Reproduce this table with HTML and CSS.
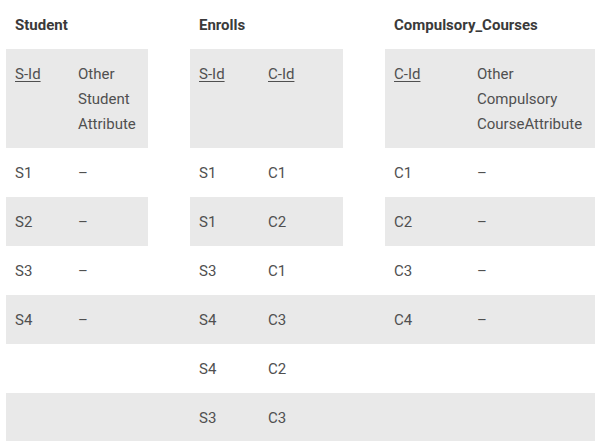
FILE: index.html
```html
<!DOCTYPE html>
<html>
<head>
<meta charset="utf-8">
<link rel="stylesheet" href="styles.css">
</head>
<body>
<table class="schema">
  <colgroup>
    <col class="c1"><col class="c2"><col class="gap">
    <col class="c3"><col class="c4"><col class="gap">
    <col class="c5"><col class="c6">
  </colgroup>
  <tr class="titles">
    <th colspan="2">Student</th><td></td>
    <th colspan="2">Enrolls</th><td></td>
    <th colspan="2">Compulsory_Courses</th>
  </tr>
  <tr class="head seg">
    <td class="k"><u>S-Id</u></td><td>Other<br>Student<br>Attribute</td><td class="g"></td>
    <td class="k"><u>S-Id</u></td><td><u>C-Id</u></td><td class="g"></td>
    <td class="k"><u>C-Id</u></td><td>Other<br>Compulsory<br>CourseAttribute</td>
  </tr>
  <tr>
    <td>S1</td><td>–</td><td></td>
    <td>S1</td><td>C1</td><td></td>
    <td>C1</td><td>–</td>
  </tr>
  <tr class="seg">
    <td>S2</td><td>–</td><td class="g"></td>
    <td>S1</td><td>C2</td><td class="g"></td>
    <td>C2</td><td>–</td>
  </tr>
  <tr>
    <td>S3</td><td>–</td><td></td>
    <td>S3</td><td>C1</td><td></td>
    <td>C3</td><td>–</td>
  </tr>
  <tr class="full">
    <td>S4</td><td>–</td><td></td>
    <td>S4</td><td>C3</td><td></td>
    <td>C4</td><td>–</td>
  </tr>
  <tr>
    <td></td><td></td><td></td>
    <td>S4</td><td>C2</td><td></td>
    <td></td><td></td>
  </tr>
  <tr class="full">
    <td></td><td></td><td></td>
    <td>S3</td><td>C3</td><td></td>
    <td></td><td></td>
  </tr>
</table>
</body>
</html>
```

FILE: styles.css
```css
html, body {
  margin: 0;
  padding: 0;
  background: #ffffff;
}

body {
  padding-left: 6px;
  font-family: Roboto, "Liberation Sans", sans-serif;
  font-size: 15px;
  color: #505050;
}

.schema {
  border-collapse: collapse;
  table-layout: fixed;
  width: 589px;
}

.c1 { width: 63px; }
.c2 { width: 79px; }
.gap { width: 42px; }
.c3 { width: 69px; }
.c4 { width: 84px; }
.c5 { width: 83px; }
.c6 { width: 127px; }

.schema th,
.schema td {
  padding: 13px 9px 11px;
  line-height: 25px;
  height: 25px;
  vertical-align: top;
  text-align: left;
  white-space: nowrap;
}

.schema td.g,
.schema td:empty {
  padding: 0;
}

.titles th {
  font-weight: 700;
  color: #3a3a3a;
}

.schema u {
  text-decoration: underline;
  text-underline-offset: 2px;
}

.seg td {
  background: #e9e9e9;
}

.seg td.g {
  background: transparent;
}

.full td {
  background: #e9e9e9;
}
```
